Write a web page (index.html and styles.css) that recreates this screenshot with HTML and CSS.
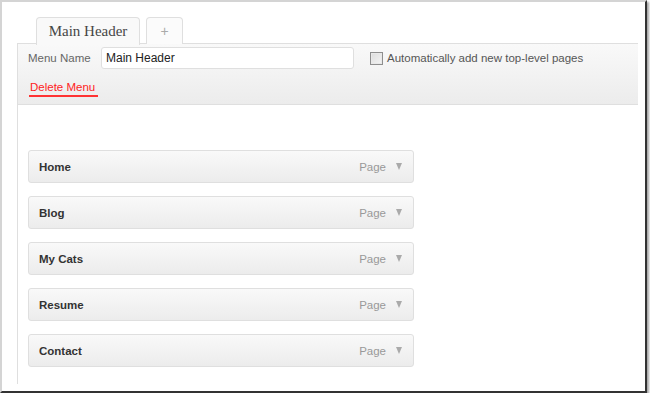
FILE: index.html
```html
<!DOCTYPE html>
<html lang="en">
<head>
  <meta charset="UTF-8">
  <title>Menus</title>
  <link rel="stylesheet" href="styles.css">
</head>
<body>
  <div class="frame">
    <div class="tabs">
      <div class="tab active">Main Header</div>
      <div class="tab add">+</div>
    </div>

    <div class="menu-bar">
      <div class="name-row">
        <label class="name-label">Menu Name</label>
        <input class="name-input" type="text" value="Main Header">
        <span class="check-box"></span>
        <span class="check-label">Automatically add new top-level pages</span>
      </div>
      <a href="#" class="delete-link">Delete Menu</a>
    </div>

    <div class="menu-body">
      <div class="item"><span class="item-title">Home</span><span class="item-type">Page</span><span class="arrow"></span></div>
      <div class="item"><span class="item-title">Blog</span><span class="item-type">Page</span><span class="arrow"></span></div>
      <div class="item"><span class="item-title">My Cats</span><span class="item-type">Page</span><span class="arrow"></span></div>
      <div class="item"><span class="item-title">Resume</span><span class="item-type">Page</span><span class="arrow"></span></div>
      <div class="item"><span class="item-title">Contact</span><span class="item-type">Page</span><span class="arrow"></span></div>
    </div>
  </div>
</body>
</html>
```

FILE: styles.css
```css
body {
  margin: 0;
  background: #fff;
  font-family: "Liberation Sans", Arial, sans-serif;
  font-size: 11.5px;
}
.frame {
  width: 647px;
  height: 393px;
  background: #fff;
  border-top: 2px solid #d4d4d4;
  border-left: 2px solid #d4d4d4;
  border-right: 2px solid #333;
  border-bottom: 2px solid #333;
  box-shadow: 2px 2px 2px rgba(0, 0, 0, 0.35);
  padding: 15px 0 0 15px;
  box-sizing: border-box;
  overflow: hidden;
}
.tabs {
  display: flex;
  gap: 6px;
  margin-left: 19px;
  height: 27px;
  position: relative;
  margin-bottom: -1px;
}
.tab {
  box-sizing: border-box;
  height: 27px;
  border: 1px solid #dfdfdf;
  border-bottom: none;
  border-radius: 4px 4px 0 0;
  text-align: center;
  line-height: 26px;
}
.tab.active {
  width: 104px;
  background: #f9f9f9;
  font-family: "Liberation Serif", "DejaVu Serif", serif;
  font-size: 15px;
  color: #464646;
  height: 28px;
}
.tab.add {
  width: 37px;
  background: #fbfbfb;
  color: #aaa;
  font-size: 14px;
}
.menu-bar {
  width: 621px;
  height: 62px;
  box-sizing: border-box;
  border-top: 1px solid #dfdfdf;
  border-bottom: 1px solid #dfdfdf;
  border-left: 1px solid #dfdfdf;
  background: linear-gradient(to bottom, #f9f9f9, #ececec);
  padding: 3px 0 0 10px;
}
.name-row {
  display: flex;
  align-items: center;
  height: 22px;
}
.name-label {
  color: #666;
  width: 73px;
}
.name-input {
  width: 253px;
  height: 22px;
  box-sizing: border-box;
  border: 1px solid #dfdfdf;
  border-radius: 3px;
  background: #fff;
  font-family: "Liberation Sans", Arial, sans-serif;
  font-size: 12px;
  color: #222;
  padding: 0 4px;
  margin: 0;
  outline: none;
}
.check-box {
  width: 11px;
  height: 11px;
  margin-left: 16px;
  border: 1px solid #8e8e8e;
  background: linear-gradient(to bottom right, #dcdcdc, #f4f4f4);
  box-shadow: inset 0 0 0 1px #e8e8e8;
}
.check-label {
  margin-left: 4px;
  color: #555;
}
.delete-link {
  display: inline-block;
  margin-top: 11px;
  margin-left: 1px;
  color: #f22;
  text-decoration: none;
  line-height: 14px;
  padding: 0 3px 1px 1px;
  border-bottom: 2px solid #f33;
}
.menu-body {
  width: 621px;
  height: 279px;
  box-sizing: border-box;
  border-left: 1px solid #dfdfdf;
  padding: 45px 0 0 10px;
  display: flex;
  flex-direction: column;
  gap: 13px;
}
.item {
  width: 386px;
  height: 33px;
  box-sizing: border-box;
  border: 1px solid #dfdfdf;
  border-radius: 3px;
  background: linear-gradient(to bottom, #f9f9f9, #ececec);
  display: flex;
  align-items: center;
  padding: 0 10px 0 10px;
}
.item-title {
  font-weight: bold;
  color: #333;
  flex: 1;
}
.item-type {
  color: #999;
}
.arrow {
  width: 0;
  height: 0;
  margin-left: 10px;
  margin-right: 1px;
  border-left: 3.5px solid transparent;
  border-right: 3.5px solid transparent;
  border-top: 7px solid #aaa;
}
```
